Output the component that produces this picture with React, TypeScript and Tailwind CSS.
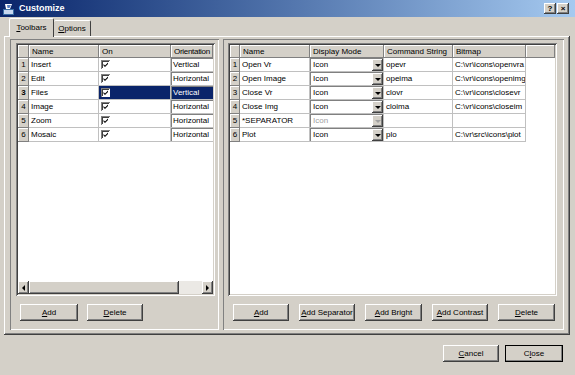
import React from 'react';

const raised =
  'bg-[#d4d0c8] shadow-[inset_-1px_-1px_#404040,inset_1px_1px_#ffffff,inset_-2px_-2px_#808080]';
const headCell =
  'bg-[#d4d0c8] shadow-[inset_-1px_-1px_#808080,inset_1px_1px_#ffffff] flex items-center justify-center shrink-0 h-full';
const headText =
  'bg-[#d4d0c8] shadow-[inset_-1px_-1px_#808080,inset_1px_1px_#ffffff] flex items-center pl-[3px] shrink-0 h-full whitespace-nowrap overflow-hidden';
const sunken =
  'shadow-[inset_1px_1px_#808080,inset_-1px_-1px_#ffffff,inset_2px_2px_#404040,inset_-2px_-2px_#d4d0c8]';

const TOOLBARS = [
  { n: 1, name: 'Insert', orient: 'Vertical' },
  { n: 2, name: 'Edit', orient: 'Horizontal' },
  { n: 3, name: 'Files', orient: 'Vertical', sel: true },
  { n: 4, name: 'Image', orient: 'Horizontal' },
  { n: 5, name: 'Zoom', orient: 'Horizontal' },
  { n: 6, name: 'Mosaic', orient: 'Horizontal' },
];

// bitmap paths are clipped by the column, as in the dialog
const BUTTONS = [
  { n: 1, name: 'Open Vr', cmd: 'opevr', bmp: 'C:\\vr\\icons\\openvra' },
  { n: 2, name: 'Open Image', cmd: 'opeima', bmp: 'C:\\vr\\icons\\openimg' },
  { n: 3, name: 'Close Vr', cmd: 'clovr', bmp: 'C:\\vr\\icons\\closevr' },
  { n: 4, name: 'Close Img', cmd: 'cloima', bmp: 'C:\\vr\\icons\\closeim' },
  { n: 5, name: '*SEPARATOR', cmd: '', bmp: '', off: true },
  { n: 6, name: 'Plot', cmd: 'plo', bmp: 'C:\\vr\\src\\icons\\plot' },
];

function Btn({ label, u, w, def }: { label: string; u: number; w: string; def?: boolean }) {
  return (
    <div
      className={`${w} h-[17px] ${raised} flex items-center justify-center ${
        def ? 'outline outline-1 outline-black -outline-offset-1' : ''
      }`}
    >
      <span>
        {label.slice(0, u)}
        <span className="underline">{label[u]}</span>
        {label.slice(u + 1)}
      </span>
    </div>
  );
}

function Check() {
  return (
    <svg width="9" height="9" viewBox="0 0 9 9" className="shrink-0">
      <rect x="0" y="0" width="9" height="9" fill="#808080" />
      <rect x="1" y="1" width="8" height="8" fill="#ffffff" />
      <rect x="1" y="1" width="7" height="7" fill="#404040" />
      <rect x="2" y="2" width="6" height="6" fill="#ffffff" />
      <path d="M2.5 4 L4 5.5 L7 2.5 L7 4 L4 7 L2.5 5.5 Z" fill="#000" />
    </svg>
  );
}

function Arrow({ dir, grey }: { dir: 'l' | 'r' | 'd'; grey?: boolean }) {
  const d = dir === 'l' ? 'M5 1 L2 4 L5 7 Z' : dir === 'r' ? 'M2 1 L5 4 L2 7 Z' : 'M1 3 L7 3 L4 6 Z';
  return (
    <svg width="8" height="8" viewBox="0 0 8 8">
      <path d={d} fill={grey ? '#a0a0a0' : '#000'} />
    </svg>
  );
}

export default function App() {
  return (
    <div className="w-[575px] h-[375px] bg-[#d4d0c8] flex flex-col font-['Liberation_Sans',Arial,sans-serif] text-[8px] text-black overflow-hidden">
      {/* title bar */}
      <div className="h-[17px] shrink-0 bg-linear-to-r from-[#0a246a] to-[#a6caf0] flex items-center pl-[2px] pr-[6px]">
        <svg width="14" height="14" viewBox="0 0 14 14" className="mr-[3px]">
          <rect x="1" y="7" width="11" height="6" fill="#3a6ea5" />
          <rect x="2" y="8" width="9" height="4" fill="#c8d8f0" />
          <path d="M3 2 L10 2 L8 7 L4 7 Z" fill="#ffffff" />
          <path d="M5 3 L9 3 L7.5 6 L5.5 6 Z" fill="#5a7fc0" />
        </svg>
        <span className="text-white font-bold text-[9px]">Customize</span>
        <div className="flex-1" />
        <div className={`w-[12px] h-[11px] ${raised} flex items-center justify-center font-bold text-[8px] leading-none`}>?</div>
        <div className={`w-[12px] h-[11px] ml-[1px] ${raised} flex items-center justify-center font-bold text-[8px] leading-none`}>×</div>
      </div>

      {/* tabs */}
      <div className="flex items-end pl-[9px] h-[20px] shrink-0 relative z-10 -mb-[1px]">
        <div className="w-[45px] h-[19px] bg-[#d4d0c8] rounded-t-[2px] border-t border-l border-white border-r border-r-[#404040] flex items-center justify-center">
          <span>
            <span className="underline">T</span>oolbars
          </span>
        </div>
        <div className="w-[37px] h-[16px] mb-[1px] bg-[#d4d0c8] rounded-t-[2px] border-t border-white border-r border-r-[#404040] flex items-center justify-center">
          <span>
            <span className="underline">O</span>ptions
          </span>
        </div>
      </div>

      {/* tab panel */}
      <div className={`ml-[4px] w-[566px] h-[299px] shrink-0 ${raised} flex gap-[4px] pl-[6px] pr-[6px] pt-[3px] pb-[5px]`}>
        {/* left pane */}
        <div className="w-[209px] h-full shadow-[inset_1px_1px_#808080,inset_-1px_-1px_#ffffff] flex flex-col pt-[4px] pl-[6px]">
          <div className={`w-[199px] h-[253px] p-[2px] ${sunken}`}>
            <div className="w-full h-full bg-white flex flex-col overflow-hidden">
              <div className="h-[13px] flex shrink-0">
                <div className={`${headCell} w-[11px]`} />
                <div className={`${headText} w-[70px]`}>Name</div>
                <div className={`${headText} w-[72px]`}>On</div>
                <div className={`${headText} w-[42px] pl-[2px] tracking-[-0.3px]`}>Orientation</div>
              </div>
              {TOOLBARS.map((r) => (
                <div key={r.n} className="h-[14px] flex shrink-0">
                  <div className={`${headCell} w-[11px] ${r.sel ? 'font-bold' : ''}`}>{r.n}</div>
                  <div className="w-[70px] h-full border-r border-b border-[#c0c0c0] flex items-center pl-[2px] shrink-0">
                    {r.name}
                  </div>
                  <div
                    className={`w-[72px] h-full border-r border-b border-[#c0c0c0] flex items-center pl-[2px] shrink-0 ${
                      r.sel ? 'bg-[#0a246a]' : ''
                    }`}
                  >
                    <Check />
                  </div>
                  <div
                    className={`w-[42px] h-full border-b border-[#c0c0c0] shadow-[inset_1px_1px_#808080] flex items-center pl-[2px] shrink-0 whitespace-nowrap ${
                      r.sel ? 'bg-[#0a246a] text-white' : ''
                    }`}
                  >
                    {r.orient}
                  </div>
                </div>
              ))}
              <div className="flex-1" />
              {/* horizontal scrollbar */}
              <div className="h-[13px] flex shrink-0 bg-[#ebe9e5]">
                <div className={`w-[11px] h-full ${raised} flex items-center justify-center`}>
                  <Arrow dir="l" />
                </div>
                <div className={`w-[150px] h-full ${raised}`} />
                <div className="flex-1" />
                <div className={`w-[11px] h-full ${raised} flex items-center justify-center`}>
                  <Arrow dir="r" />
                </div>
              </div>
            </div>
          </div>
          <div className="flex gap-[9px] mt-[8px] pl-[4px]">
            <Btn label="Add" u={0} w="w-[58px]" />
            <Btn label="Delete" u={0} w="w-[56px]" />
          </div>
        </div>

        {/* right pane */}
        <div className="w-[341px] h-full shadow-[inset_1px_1px_#808080,inset_-1px_-1px_#ffffff] flex flex-col pt-[4px] pl-[5px]">
          <div className={`w-[329px] h-[253px] p-[2px] ${sunken}`}>
            <div className="w-full h-full bg-white flex flex-col overflow-hidden">
              <div className="h-[13px] flex shrink-0">
                <div className={`${headCell} w-[10px]`} />
                <div className={`${headText} w-[70px]`}>Name</div>
                <div className={`${headText} w-[74px]`}>Display Mode</div>
                <div className={`${headText} w-[69px]`}>Command String</div>
                <div className={`${headText} w-[73px]`}>Bitmap</div>
                <div className={`${headCell} flex-1`} />
              </div>
              {BUTTONS.map((r) => (
                <div key={r.n} className="h-[14px] flex shrink-0">
                  <div className={`${headCell} w-[10px]`}>{r.n}</div>
                  <div className="w-[70px] h-full border-r border-b border-[#c0c0c0] flex items-center pl-[2px] shrink-0">
                    {r.name}
                  </div>
                  <div className="w-[74px] h-full border-r border-b border-[#c0c0c0] flex shrink-0 shadow-[inset_1px_1px_#808080]">
                    <div className={`flex-1 flex items-center pl-[3px] ${r.off ? 'text-[#a0a0a0]' : ''}`}>Icon</div>
                    <div className={`w-[11px] h-[12px] mt-[1px] ${raised} flex items-center justify-center`}>
                      <Arrow dir="d" grey={r.off} />
                    </div>
                  </div>
                  <div className="w-[69px] h-full border-r border-b border-[#c0c0c0] flex items-center pl-[2px] shrink-0">
                    {r.cmd}
                  </div>
                  <div className="w-[73px] h-full border-r border-b border-[#c0c0c0] flex items-center pl-[2px] shrink-0 overflow-hidden whitespace-nowrap">
                    {r.bmp}
                  </div>
                </div>
              ))}
            </div>
          </div>
          <div className="flex gap-[10px] mt-[8px] pl-[5px]">
            <Btn label="Add" u={0} w="w-[56px]" />
            <Btn label="Add Separator" u={0} w="w-[56px]" />
            <Btn label="Add Bright" u={0} w="w-[57px]" />
            <Btn label="Add Contrast" u={0} w="w-[56px]" />
            <Btn label="Delete" u={0} w="w-[57px]" />
          </div>
        </div>
      </div>

      {/* dialog buttons */}
      <div className="flex justify-end gap-[6px] pr-[12px] mt-[10px]">
        <Btn label="Cancel" u={0} w="w-[56px]" />
        <Btn label="Close" u={1} w="w-[58px]" def />
      </div>
    </div>
  );
}
